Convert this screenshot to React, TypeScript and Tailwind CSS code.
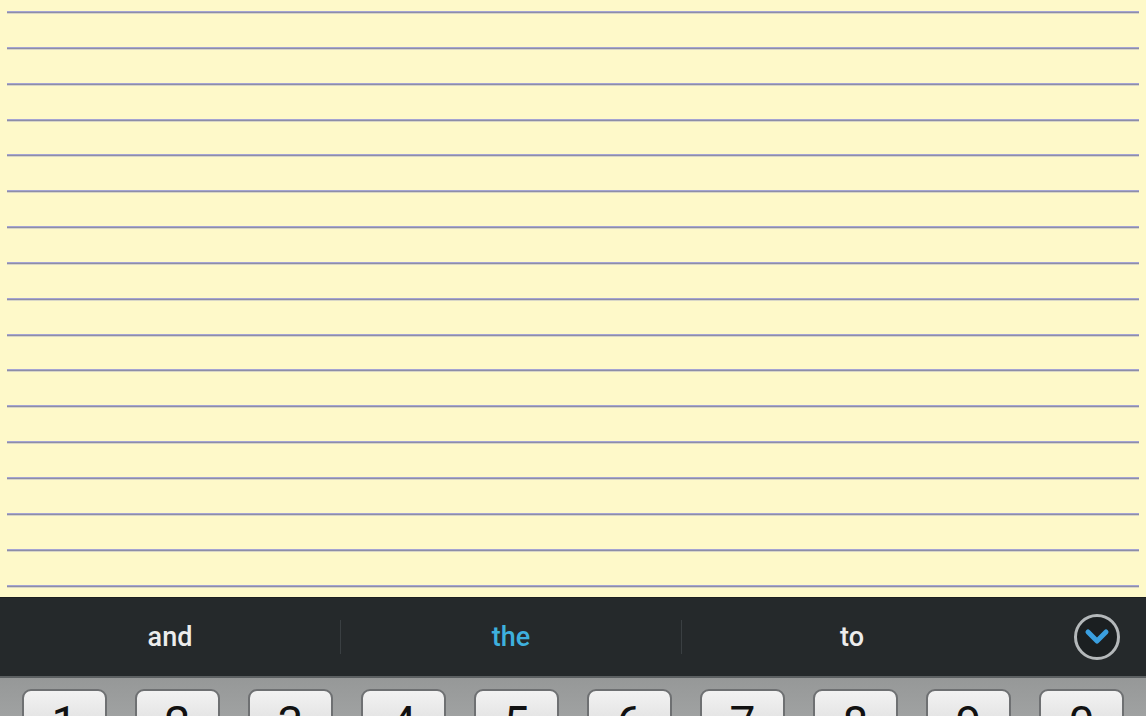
import React from 'react';

const App = () => {
  const lines = Array.from({ length: 17 }, (_, i) => i);
  const keys = ['1', '2', '3', '4', '5', '6', '7', '8', '9', '0'];
  const words = [
    { text: 'and', color: 'text-[#ececec]' },
    { text: 'the', color: 'text-[#3eb0de]' },
    { text: 'to', color: 'text-[#ececec]' }
  ];

  return (
    <div className="w-[1146px] h-[716px] overflow-hidden flex flex-col bg-[#25292b]" style={{ fontFamily: 'Roboto, "Liberation Sans", sans-serif' }}>
      {/* Notepad */}
      <div className="h-[597px] shrink-0 bg-[#fef9c9] pt-[11px] px-[7px] flex flex-col gap-[32.85px]">
        {lines.map((i) => (
          <div key={i} className="h-[3px] shrink-0 flex flex-col">
            <div className="h-px bg-[#a4a4d2]" />
            <div className="h-px bg-[#8e8ea6]" />
            <div className="h-px bg-[#d8d6c8]" />
          </div>
        ))}
      </div>

      {/* Suggestion bar */}
      <div className="h-[79px] shrink-0 bg-[#25292b] border-t border-[#1c1f20] flex items-center">
        {words.map((w, i) => (
          <React.Fragment key={w.text}>
            {i > 0 && <div className="w-px h-[34px] bg-[#3a3f42]" />}
            <div className={`w-[340px] text-center text-[27px] font-medium ${w.color}`}>{w.text}</div>
          </React.Fragment>
        ))}
        <div className="flex-1 flex justify-end pr-[26px]">
          <div className="w-[46px] h-[46px] rounded-full border-[3px] border-[#b4b8ba] bg-[#1b1f21] flex items-center justify-center">
            <svg width="26" height="20" viewBox="0 0 26 20" fill="none">
              <path d="M4 5 L13 14 L22 5" stroke="#3a9fe0" strokeWidth="5" strokeLinecap="round" strokeLinejoin="round" />
            </svg>
          </div>
        </div>
      </div>

      {/* Keyboard */}
      <div className="flex-1 bg-gradient-to-b from-[#969898] to-[#a8aaaa] border-t-2 border-[#5c6062] pt-[11px] pl-[22px] flex gap-[28px]">
        {keys.map((k) => (
          <div
            key={k}
            className="w-[85px] h-[60px] shrink-0 rounded-t-[9px] border-2 border-[#6e7072] bg-gradient-to-b from-[#f2f2f2] to-[#d6d6d6] flex justify-center"
          >
            <span className="text-[46px] leading-none mt-[9px] text-[#111]">{k}</span>
          </div>
        ))}
      </div>
    </div>
  );
};

export default App;
